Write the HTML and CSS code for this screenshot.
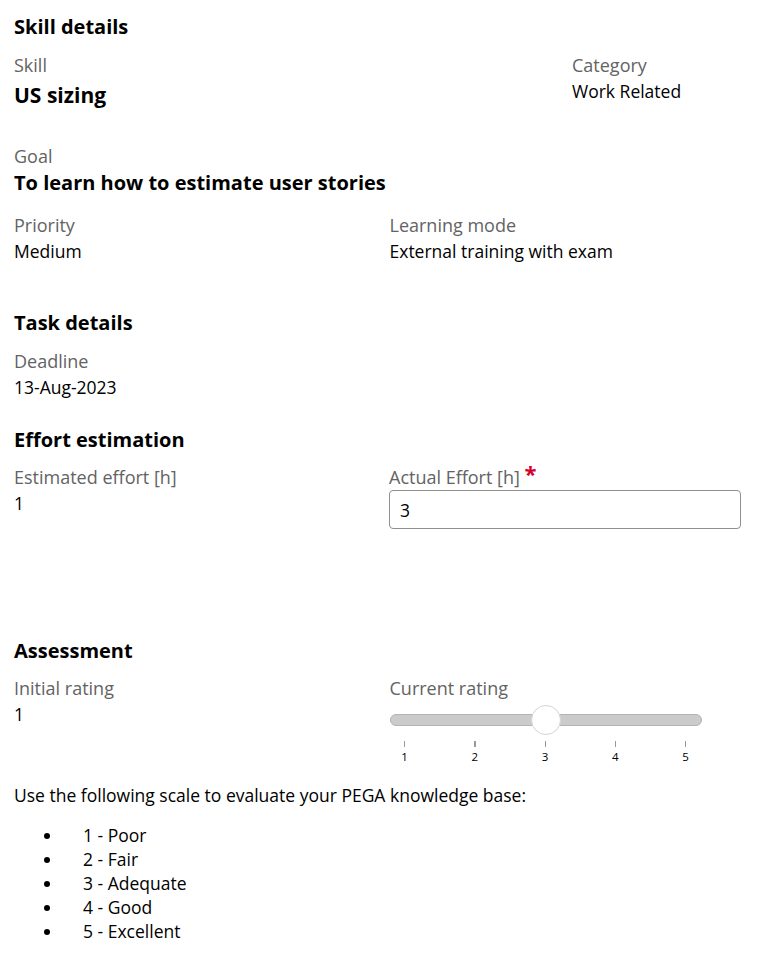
FILE: index.html
```html
<!DOCTYPE html>
<html lang="en">
<head>
<meta charset="utf-8">
<title>Skill details</title>
<link rel="stylesheet" href="styles.css">
</head>
<body>
<main class="page">
  <h2 class="heading first">Skill details</h2>
  <div class="row row-skill">
    <div class="field">
      <div class="label">Skill</div>
      <div class="value big">US sizing</div>
    </div>
    <div class="field">
      <div class="label">Category</div>
      <div class="value">Work Related</div>
    </div>
  </div>
  <div class="field goal">
    <div class="label">Goal</div>
    <div class="value strong">To learn how to estimate user stories</div>
  </div>
  <div class="row row-two priority">
    <div class="field">
      <div class="label">Priority</div>
      <div class="value">Medium</div>
    </div>
    <div class="field">
      <div class="label">Learning mode</div>
      <div class="value">External training with exam</div>
    </div>
  </div>

  <h2 class="heading task">Task details</h2>
  <div class="field after-heading">
    <div class="label">Deadline</div>
    <div class="value">13-Aug-2023</div>
  </div>

  <h2 class="heading effort">Effort estimation</h2>
  <div class="row row-two after-heading-sm">
    <div class="field">
      <div class="label">Estimated effort [h]</div>
      <div class="value">1</div>
    </div>
    <div class="field">
      <label class="label" for="actual">Actual Effort [h] <span class="req">*</span></label>
      <input id="actual" class="input" type="text" value="3">
    </div>
  </div>

  <h2 class="heading assessment">Assessment</h2>
  <div class="row row-two after-heading-sm">
    <div class="field">
      <div class="label">Initial rating</div>
      <div class="value">1</div>
    </div>
    <div class="field">
      <div class="label">Current rating</div>
      <div class="slider">
        <div class="track"><div class="thumb"></div></div>
        <div class="ticks">
          <div class="tick"><span class="mark"></span><span class="num">1</span></div>
          <div class="tick"><span class="mark thick"></span><span class="num">2</span></div>
          <div class="tick"><span class="mark"></span><span class="num">3</span></div>
          <div class="tick"><span class="mark"></span><span class="num">4</span></div>
          <div class="tick"><span class="mark"></span><span class="num">5</span></div>
        </div>
      </div>
    </div>
  </div>

  <p class="scale-intro">Use the following scale to evaluate your PEGA knowledge base:</p>
  <ul class="scale">
    <li>1 - Poor</li>
    <li>2 - Fair</li>
    <li>3 - Adequate</li>
    <li>4 - Good</li>
    <li>5 - Excellent</li>
  </ul>
</main>
</body>
</html>
```
FILE: styles.css
```css
* { box-sizing: border-box; }
html, body { margin: 0; padding: 0; background: #fff; }
body {
  font-family: "Open Sans", "Noto Sans", sans-serif;
  font-size: 17.5px;
  line-height: 24px;
  color: #000;
}
.page {
  width: 727px;
  margin-left: 14px;
  padding-top: 15px;
}
.heading {
  margin: 0;
  font-size: 20px;
  line-height: 24px;
  font-weight: 700;
}
.heading.task { margin-top: 48px; }
.heading.effort { margin-top: 29px; }
.heading.assessment { margin-top: 110px; }

.row { display: grid; }
.row-skill {
  grid-template-columns: 1fr 169px;
  margin-top: 14px;
}
.row-two {
  grid-template-columns: 1fr 1fr;
  column-gap: 24px;
}
.after-heading { margin-top: 14px; }
.after-heading-sm { margin-top: 13px; }
.field { display: flex; flex-direction: column; }
.label {
  display: block;
  color: #636363;
  font-size: 18px;
  line-height: 24px;
}
.value { margin-top: 2px; }
.value.big {
  font-size: 21px;
  font-weight: 700;
  line-height: 30px;
  margin-top: 3px;
}
.goal { margin-top: 34px; }
.value.strong {
  font-size: 20px;
  font-weight: 700;
  line-height: 26px;
}
.priority { margin-top: 17px; }
.req {
  color: #d3002b;
  font-weight: 700;
  font-size: 22px;
  line-height: 16px;
  vertical-align: top;
}
.input {
  margin-top: 1px;
  width: 352px;
  height: 39px;
  border: 1px solid #8f8f8f;
  border-radius: 4px;
  padding: 0 10px;
  font: inherit;
  color: #000;
}

.slider { width: 312px; margin-top: 14px; }
.track {
  position: relative;
  height: 12px;
  border-radius: 6px;
  background: #cbcbcb;
  border: 1px solid #b3b3b3;
}
.thumb {
  position: absolute;
  left: 140px;
  top: -10px;
  width: 30px;
  height: 30px;
  border-radius: 50%;
  background: #fff;
  border: 1px solid #d4d4d4;
}
.ticks {
  display: flex;
  justify-content: space-between;
  margin-top: 15px;
  width: 311px;
}
.tick {
  width: 30px;
  display: flex;
  flex-direction: column;
  align-items: center;
}
.mark {
  display: block;
  width: 1px;
  height: 6px;
  background: #999;
}
.mark.thick { width: 2px; }
.num {
  font-size: 11.5px;
  line-height: 14px;
  margin-top: 3px;
  color: #000;
}

.scale-intro { margin: 19px 0 0; }
.scale {
  margin: 16px 0 0;
  padding: 0;
  list-style: none;
}
.scale li {
  position: relative;
  padding-left: 69px;
}
.scale li::before {
  content: "";
  position: absolute;
  left: 30px;
  top: 10px;
  width: 6px;
  height: 6px;
  border-radius: 50%;
  background: #000;
}
```
